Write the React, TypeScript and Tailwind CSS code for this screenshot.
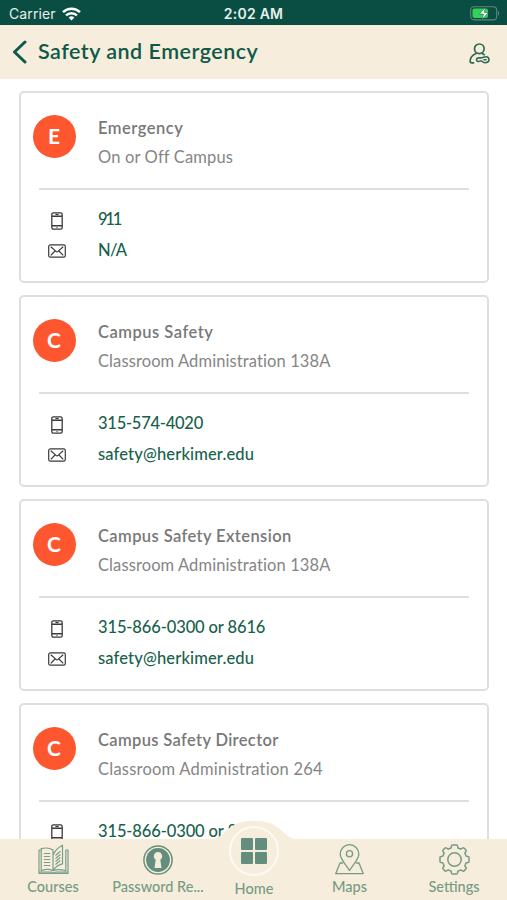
import type { ReactNode } from "react";

type Contact = {
  name: string;
  nameSpacing: string;
  place: string;
  placeSpacing: string;
  phone: string;
  phoneSpacing: string;
  email: string;
  emailSpacing: string;
};

const contacts: Contact[] = [
  { name: "Emergency", nameSpacing: "tracking-[0.5px]", place: "On or Off Campus", placeSpacing: "tracking-[0.15px]", phone: "911", phoneSpacing: "tracking-[-2.2px]", email: "N/A", emailSpacing: "tracking-[-0.7px]" },
  { name: "Campus Safety", nameSpacing: "tracking-[0.5px]", place: "Classroom Administration 138A", placeSpacing: "tracking-[0.1px]", phone: "315-574-4020", phoneSpacing: "tracking-[-0.25px]", email: "safety@herkimer.edu", emailSpacing: "tracking-[0.15px]" },
  { name: "Campus Safety Extension", nameSpacing: "tracking-[0.4px]", place: "Classroom Administration 138A", placeSpacing: "tracking-[0.1px]", phone: "315-866-0300 or 8616", phoneSpacing: "tracking-[-0.12px]", email: "safety@herkimer.edu", emailSpacing: "tracking-[0.15px]" },
  { name: "Campus Safety Director", nameSpacing: "tracking-[0.35px]", place: "Classroom Administration 264", placeSpacing: "tracking-[0.23px]", phone: "315-866-0300 or 8616", phoneSpacing: "tracking-[-0.12px]", email: "safety@herkimer.edu", emailSpacing: "tracking-[0.15px]" },
];

function PhoneIcon() {
  return (
    <svg className="h-[18px] w-[12px]" viewBox="0 0 12 18" fill="none" stroke="#3b3b3b" strokeWidth="1.3">
      <rect x="0.8" y="0.8" width="10.4" height="16.4" rx="1.6" />
      <path d="M1 4.2h10M1 13.8h10" strokeWidth="1.6" />
      <path d="M4.4 2.5h3.2" />
      <circle cx="6" cy="15.6" r="0.7" fill="#3b3b3b" stroke="none" />
    </svg>
  );
}

function MailIcon() {
  return (
    <svg className="h-[14px] w-[18px]" viewBox="0 0 18 14" fill="none" stroke="#3b3b3b" strokeWidth="1.2" strokeLinejoin="round">
      <rect x="0.7" y="0.9" width="16.6" height="12.2" rx="1.6" />
      <path d="M2.8 2.8 8 7.4c.7.6 1.3.6 2 0l5.2-4.6M2.8 11.4 7 7M15.2 11.4 11 7" />
    </svg>
  );
}

function ContactCard({ c }: { c: Contact }) {
  return (
    <section className="h-[192px] shrink-0 rounded-[5px] border-2 border-[#dedede] bg-white px-[18px]">
      <div className="flex h-[97px] border-b-2 border-[#dedede]">
        <div className="-ml-[6.5px] mt-[22px] flex size-[43px] items-center justify-center rounded-full bg-[#fe572f] pb-px text-[21px] font-bold text-white">
          {c.name[0]}
        </div>
        <div className="ml-[22.5px] pt-[21px] text-[16.5px] whitespace-nowrap text-[#858585]">
          <div className={`h-[29px] leading-[29px] font-semibold text-[#787878] ${c.nameSpacing}`}>{c.name}</div>
          <div className={`h-[29px] leading-[29px] ${c.placeSpacing}`}>{c.place}</div>
        </div>
      </div>
      <div className="pt-[13px] text-[16.5px] font-medium whitespace-nowrap text-[#17614c]">
        <div className="flex h-[31px] items-center">
          <span className="flex w-[36px] justify-center pt-[5px]"><PhoneIcon /></span>
          <span className={`ml-[23px] pt-px ${c.phoneSpacing}`}>{c.phone}</span>
        </div>
        <div className="flex h-[31px] items-center">
          <span className="flex w-[36px] justify-center pt-[3px]"><MailIcon /></span>
          <span className={`ml-[23px] pt-[2px] ${c.emailSpacing}`}>{c.email}</span>
        </div>
      </div>
    </section>
  );
}

function BookIcon() {
  return (
    <svg className="size-[31px]" viewBox="0 0 31 31" fill="none" stroke="#7b9e88" strokeWidth="1.2" strokeLinejoin="round">
      <path d="M3.2 6H1v23.5h29V6h-2.2" />
      <path d="M3.2 26.7V4.7C7 3.7 11.5 3.7 15 6v20.7C11.5 25 7 25.2 3.2 26.7ZM15 26.7c3.5-1.5 8-1.5 12.8 0V6M15 26.7V11c2-4.5 5.5-7.8 9.5-9.8v18.6c-4 1-7.5 3.2-9.5 6.9M1 28.2h12.5l2 .8 2-.8H30" />
      <path d="M5.8 9.5h6.4M5.8 12.5h6.4M5.8 15.5h6.4M5.8 18.5h6.4M5.8 21.5h6.4M17.5 11.5l4.8-4.3M17.5 14.5l4.8-4M17.5 17.5l4.8-4M17.5 20.5l4.8-4" />
    </svg>
  );
}

function KeyholeIcon() {
  return (
    <svg className="size-[30px]" viewBox="0 0 30 30">
      <circle cx="15" cy="15" r="14.1" fill="none" stroke="#669078" strokeWidth="1.5" />
      <circle cx="15" cy="15" r="11.9" fill="#638e7d" />
      <path d="M15 7a4.3 4.3 0 0 0-2.3 7.800L11.500 23h7l-1.200-8.200A4.300 4.300 0 0 0 15 7Z" fill="#f5edda" />
    </svg>
  );
}

function MapsIcon() {
  return (
    <svg className="h-[31px] w-[29px]" viewBox="0 0 29 31" fill="none" stroke="#769b85" strokeWidth="1.3" strokeLinejoin="round">
      <path d="M14.5 26.5C11 20.5 5.2 15.5 5.2 10a9.3 9.3 0 0 1 18.6 0c0 5.5-5.8 10.5-9.3 16.5Z" />
      <circle cx="14.5" cy="9.8" r="3.1" />
      <path d="M8 19H5L.8 29.6h27.4L24 19h-3" />
    </svg>
  );
}

function GearIcon() {
  return (
    <svg className="size-[31px]" viewBox="0 0 31 31" fill="none" stroke="#769b85" strokeWidth="1.5" strokeLinejoin="round">
      <path d="M13.500 1h4q1 0 1.100 1l.3 2q1.500.4 2.900 1.200l1.700-1.200q.8-.6 1.500.1l1.900 1.900q.7.700.1 1.500l-1.200 1.700q.8 1.400 1.200 2.900l2 .3q1 .1 1 1.100v4q0 1-1 1.100l-2 .3q-.4 1.500-1.200 2.900l1.200 1.700q.6.800-.1 1.500l-1.900 1.900q-.7.700-1.500.1l-1.700-1.200q-1.400.8-2.900 1.200l-.3 2q-.1 1-1.100 1h-4q-1 0-1.100-1l-.3-2q-1.500-.4-2.900-1.200L7.500 27q-.8.600-1.500-.1L4.100 25q-.7-.7-.1-1.500l1.200-1.700Q4.400 20.400 4 18.900l-2-.3q-1-.1-1-1.100v-4q0-1 1-1.100l2-.3q.4-1.500 1.200-2.900L4 7.500q-.6-.8.1-1.500L6 4.100q.7-.7 1.500-.1l1.700 1.200q1.400-.8 2.900-1.200l.3-2q.1-1 1.100-1Z" />
      <circle cx="15.5" cy="15.5" r="6.7" />
    </svg>
  );
}

function NavItem({ icon, label, className }: { icon: ReactNode; label: string; className: string }) {
  return (
    <div className={`flex flex-col items-center pt-[5px] ${className}`}>
      <div className="flex h-[31px] items-center">{icon}</div>
      <span className="mt-[2px] text-[14.5px] leading-[20px] font-medium whitespace-nowrap">{label}</span>
    </div>
  );
}

export default function App() {
  return (
    <div className="flex h-[900px] w-[507px] flex-col overflow-hidden bg-white font-[Lato,sans-serif]">
      <div className="grid h-[25px] shrink-0 grid-cols-3 items-center bg-[#0a4e43] pt-[2px] pr-[7px] pl-[9px] font-[Inter,sans-serif] text-[#e6efec]">
        <div className="flex items-center gap-[6px] text-[14px]">
          <span className="tracking-[0.1px]">Carrier</span>
          <svg className="h-[14px] w-[19px]" viewBox="0 0 19 14" fill="none" stroke="#ffffff" strokeWidth="2.4">
            <path d="M1 5.2a12.2 12.2 0 0 1 17 0M4 8.4a8 8 0 0 1 11 0" />
            <path d="m9.5 13.6-2.9-3a4.1 4.1 0 0 1 5.8 0Z" fill="#fff" stroke="none" />
          </svg>
        </div>
        <div className="-ml-[2px] text-center text-[14px] font-semibold tracking-[0.25px] whitespace-nowrap">2:02 AM</div>
        <svg className="h-[15px] w-[30px] justify-self-end" viewBox="0 0 30 15">
          <rect x="0.7" y="0.7" width="26" height="13.2" rx="3.5" fill="none" stroke="#5d877e" strokeWidth="1.1" />
          <rect x="2.5" y="2.5" width="15.5" height="9.6" rx="2" fill="#32d158" />
          <path d="M28 5v4.5c1.5-.5 1.5-4 0-4.5Z" fill="#5d877e" />
          <path d="M15.500 1.500 9.500 8h4l-1.500 5.500L18.500 6.500h-4.300Z" fill="#fff" stroke="#0a4e43" strokeWidth="0.5" />
        </svg>
      </div>
      <header className="flex h-[54px] shrink-0 items-center bg-[#f6eddc] pr-[17.5px] pl-[12px] text-[#0e5947]">
        <svg className="h-[24px] w-[15px]" viewBox="0 0 15 24" fill="none" stroke="currentColor" strokeWidth="3" strokeLinecap="round" strokeLinejoin="round">
          <path d="M13 2 2.5 12 13 22" />
        </svg>
        <h1 className="ml-[11px] flex-1 pb-[2px] text-[21.5px] font-semibold tracking-[0.5px]">Safety and Emergency</h1>
        <svg className="mt-[3px] h-[21px] w-[21px]" viewBox="0 0 21 21" fill="none" stroke="#2c6955" strokeWidth="1.7" strokeLinecap="round">
          <circle cx="10.3" cy="5.8" r="4.8" />
          <path d="M7 10.5C3.5 12 1.2 14.8 1.1 18c0 1.2.6 1.9 1.8 1.9h1.6M13.3 10.5l2 1.2" />
          <path d="M14.500 14.300c-1.500.8-2.700.600-4.500.600-3.200 0-3.200 3.600-.5 3.600 1.300 0 1.500-.7 2.500-.7 1.200 0 1.500 1.900 3.700 1.900 2.600 0 4.300-1.200 4.300-3.200 0-2.300-2.500-3.500-5.500-2.200M15 16.700h2" strokeWidth="1.6" />
        </svg>
      </header>
      <main className="flex min-h-0 flex-1 flex-col gap-[12px] overflow-hidden pt-[12px] pr-[18px] pl-[19px]">
        {contacts.map((c) => <ContactCard key={c.name} c={c} />)}
      </main>
      <nav className="relative flex h-[61px] shrink-0 bg-[#f6eddc] text-[#769b85]">
        <svg className="absolute -top-[19px] left-[194px] h-[20px] w-[120px]" viewBox="0 0 120 20">
          <path d="M12 20c10-.5 14-3 20-9C39 4 48 .8 60 .8S81 4 88 11c6 6 10 8.500 20 9Z" fill="#f6eddc" />
        </svg>
        <NavItem icon={<BookIcon />} label="Courses" className="w-[106px]" />
        <NavItem icon={<KeyholeIcon />} label="Password Re..." className="w-[104px]" />
        <div className="relative -mt-[13px] flex w-[88px] flex-col items-center">
          <div className="flex size-[50px] items-center justify-center rounded-full border-2 border-[#fdfaf3]">
            <div className="grid grid-cols-2 gap-[2px]">
              <i className="size-[12px] rounded-[1px] bg-[#638e7d]" />
              <i className="size-[12px] rounded-[1px] bg-[#638e7d]" />
              <i className="size-[12px] rounded-[1px] bg-[#638e7d]" />
              <i className="size-[12px] rounded-[1px] bg-[#638e7d]" />
            </div>
          </div>
          <span className="mt-[3px] text-[14.5px] leading-[20px] font-medium">Home</span>
        </div>
        <NavItem icon={<MapsIcon />} label="Maps" className="w-[103px]" />
        <NavItem icon={<GearIcon />} label="Settings" className="w-[106px]" />
      </nav>
    </div>
  );
}
